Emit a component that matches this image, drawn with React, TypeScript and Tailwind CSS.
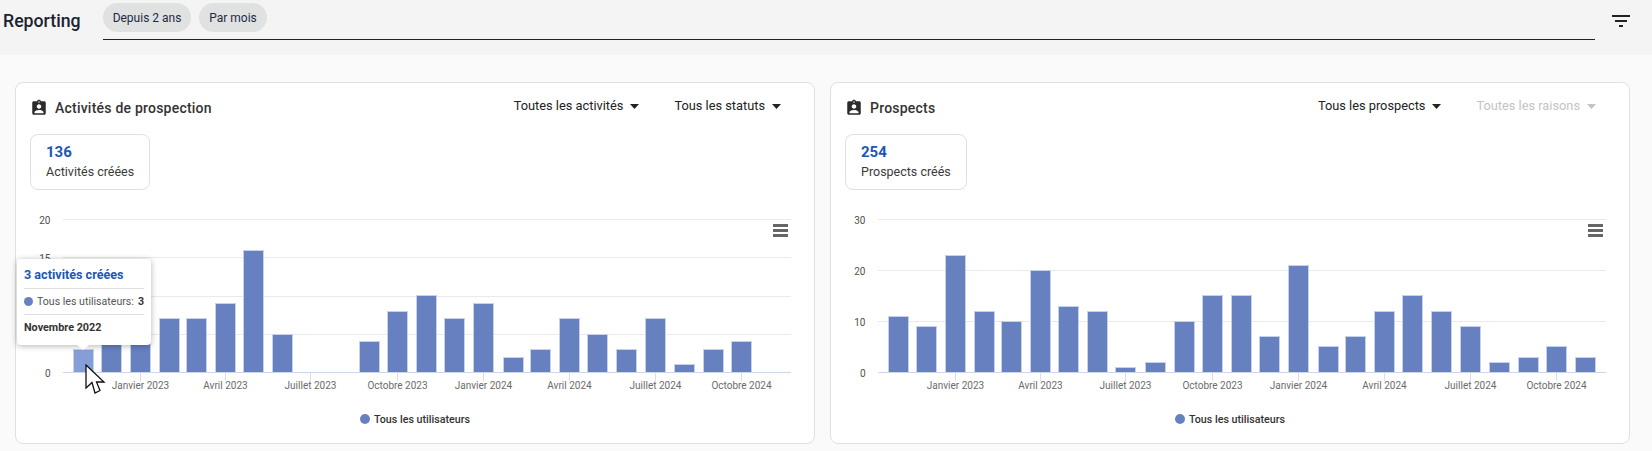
const leftData = [3, 8, 8, 7, 7, 9, 16, 5, 0, 0, 4, 8, 10, 7, 9, 2, 3, 7, 5, 3, 7, 1, 3, 4, 0];
const rightData = [11, 9, 23, 12, 10, 20, 13, 12, 1, 2, 10, 15, 15, 7, 21, 5, 7, 12, 15, 12, 9, 2, 3, 5, 3];
const days = [0, 30, 61, 92, 120, 151, 181, 212, 242, 273, 304, 334, 365, 395, 426, 457, 486, 517, 547, 578, 608, 639, 670, 700, 731];
const ticks = [
  { i: 2, label: "Janvier 2023" },
  { i: 5, label: "Avril 2023" },
  { i: 8, label: "Juillet 2023" },
  { i: 11, label: "Octobre 2023" },
  { i: 14, label: "Janvier 2024" },
  { i: 17, label: "Avril 2024" },
  { i: 20, label: "Juillet 2024" },
  { i: 23, label: "Octobre 2024" },
];

const ASSIGNMENT =
  "M19 3h-4.18C14.4 1.84 13.3 1 12 1c-1.3 0-2.4.84-2.82 2H5c-1.1 0-2 .9-2 2v14c0 1.1.9 2 2 2h14c1.1 0 2-.9 2-2V5c0-1.1-.9-2-2-2zm-7 0c.55 0 1 .45 1 1s-.45 1-1 1-1-.45-1-1 .45-1 1-1zm0 4c1.66 0 3 1.34 3 3s-1.34 3-3 3-3-1.34-3-3 1.34-3 3-3zm6 12H6v-1.4c0-2 4-3.1 6-3.1s6 1.1 6 3.1V19z";

function Caret({ muted }: { muted?: boolean }) {
  return (
    <svg width="9" height="5" viewBox="7 10 10 5" preserveAspectRatio="none" className="ml-[7px] shrink-0">
      <path d="M7 10l5 5 5-5z" fill={muted ? "#c4c4c4" : "#222222"} />
    </svg>
  );
}

function Dropdown({ label, muted }: { label: string; muted?: boolean }) {
  return (
    <div className={`flex items-center text-[12.8px] font-normal leading-4 ${muted ? "text-[#c4c4c4]" : "text-[#222222]"}`}>
      <span>{label}</span>
      <Caret muted={muted} />
    </div>
  );
}

function Chart({ data, yLabels, maxY, hover }: { data: number[]; yLabels: number[]; maxY: number; hover?: boolean }) {
  const top = 219;
  const base = 372;
  const scale = (base - top) / maxY;
  const step = maxY / (yLabels.length - 1);
  return (
    <svg width="798" height="243" viewBox="16 200 798 243" className="block" fontFamily="Roboto, sans-serif">
      {yLabels.map((v, i) => {
        const y = Math.round(top + i * step * scale);
        return (
          <g key={v}>
            {v !== 0 && <rect x="63" y={y} width="728" height="1" fill="#eaeaea" />}
            <text x="50.5" y={y + 4.5} textAnchor="end" fontSize="10" fill="#4f4f4f">
              {v}
            </text>
          </g>
        );
      })}
      {data.map((v, i) => {
        if (!v) return null;
        const x = Math.round(73 + days[i] * 0.94);
        const h = Math.round(v * scale);
        return (
          <rect
            key={i}
            x={x + 0.5}
            y={base - h + 0.5}
            width={20}
            height={h}
            fill={hover && i === 0 ? "#859ed8" : "#6780c0"}
            stroke="#c6d1ec"
            strokeWidth="1"
          />
        );
      })}
      <rect x="63" y="372" width="728" height="1" fill="#ccd6eb" />
      {ticks.map((t) => {
        const x = Math.round(83 + days[t.i] * 0.94);
        return (
          <g key={t.label}>
            <rect x={x} y="373" width="1" height="8" fill="#d8e0f0" />
            <text x={x + 0.5} y="389" textAnchor="middle" fontSize="10" fill="#6b6b6b">
              {t.label}
            </text>
          </g>
        );
      })}
      <circle cx="365" cy="419" r="5" fill="#6780c0" />
      <text x="374" y="423" fontSize="10.7" fontWeight="500" fill="#333333">
        Tous les utilisateurs
      </text>
    </svg>
  );
}

function MenuIcon() {
  return (
    <div className="absolute right-[26px] top-[24px] flex w-[15px] flex-col gap-[2px]">
      <div className="h-[3px] bg-[#666666]" />
      <div className="h-[3px] bg-[#666666]" />
      <div className="h-[3px] bg-[#666666]" />
    </div>
  );
}

function Card({
  title,
  value,
  label,
  dropdowns,
  data,
  yLabels,
  maxY,
  hover,
  children,
}: {
  title: string;
  value: string;
  label: string;
  dropdowns: { label: string; muted?: boolean }[];
  data: number[];
  yLabels: number[];
  maxY: number;
  hover?: boolean;
  children?: React.ReactNode;
}) {
  return (
    <section className="relative h-[362px] w-[800px] shrink-0 rounded-lg border border-[#e0e0e0] bg-white">
      <div className="flex h-[51px] items-start pl-[14px] pr-[33px] pt-[16px]">
        <svg width="18" height="18" viewBox="0 0 24 24" className="shrink-0">
          <path d={ASSIGNMENT} fill="#2b2b2b" />
        </svg>
        <h2 className="ml-[7px] text-[14px] font-medium leading-[18px] tracking-[0.22px] text-[#333333]">{title}</h2>
        <div className="-mt-[1px] ml-auto flex gap-[35px]">
          {dropdowns.map((d) => (
            <Dropdown key={d.label} label={d.label} muted={d.muted} />
          ))}
        </div>
      </div>
      <div className="ml-[14px] flex h-[56px] w-fit flex-col justify-center rounded-lg border border-[#e0e0e0] px-[15px]">
        <div className="text-[15px] font-bold leading-5 text-[#1b57b5]">{value}</div>
        <div className="text-[12.5px] leading-5 text-[#3a3a3a]">{label}</div>
      </div>
      <div className="relative mt-[10px]">
        <Chart data={data} yLabels={yLabels} maxY={maxY} hover={hover} />
        <MenuIcon />
        {children}
      </div>
    </section>
  );
}

function Tooltip() {
  return (
    <div className="absolute left-[1px] top-[59px] h-[86px] w-[134px] rounded-[4px] bg-white px-[7px] shadow-[0_1px_6px_rgba(0,0,0,0.3)]">
      <div className="flex h-[29px] items-center pt-[3px] text-[12.6px] font-bold text-[#1b57b5]">3 activités créées</div>
      <div className="h-px bg-[#e0e0e0]" />
      <div className="flex h-[25px] items-center whitespace-nowrap text-[10.6px] text-[#555555]">
        <span className="mr-[4px] h-[9px] w-[9px] shrink-0 rounded-full bg-[#6780c0]" />
        <span>Tous les utilisateurs:</span>
        <span className="ml-[4px] font-bold text-[#333333]">3</span>
      </div>
      <div className="h-px bg-[#e0e0e0]" />
      <div className="flex h-[26px] items-center text-[10.8px] font-bold text-[#333333]">Novembre 2022</div>
      <div className="absolute left-[60px] top-full h-0 w-0 border-x-[6px] border-t-[5px] border-x-transparent border-t-white" />
    </div>
  );
}

function Cursor() {
  return (
    <svg width="21" height="31" viewBox="0 0 21 31" className="absolute left-[69px] top-[164px]">
      <path
        d="M1 1L1 24L7 18.5L10 29L15 26.5L11.5 18L19 18Z"
        fill="#ffffff"
        stroke="#111111"
        strokeWidth="1.3"
        strokeLinejoin="miter"
      />
    </svg>
  );
}

export default function App() {
  return (
    <div className="h-[451px] w-[1652px] overflow-hidden bg-[#fafafa] font-['Roboto',sans-serif]">
      <header className="flex h-[55px] items-start bg-[#f4f4f4]">
        <h1 className="ml-[3px] mt-[9px] w-[100px] text-[17.7px] font-medium leading-6 text-[#1c2330]">Reporting</h1>
        <div className="mt-[3px] flex h-[37px] w-[1492px] items-start gap-2 border-b border-[#222222]">
          <span className="flex h-[29px] w-[88px] items-center justify-center rounded-full bg-[#e0e2e2] text-[12px] text-[#1f2a44]">
            Depuis 2 ans
          </span>
          <span className="flex h-[29px] w-[68px] items-center justify-center rounded-full bg-[#e0e2e2] text-[12px] text-[#1f2a44]">
            Par mois
          </span>
        </div>
        <svg width="24" height="24" viewBox="0 0 24 24" className="ml-[14px] mt-[9px]">
          <path d="M10 18h4v-2h-4v2zM3 6v2h18V6H3zm3 7h12v-2H6v2z" fill="#222222" />
        </svg>
      </header>
      <main className="flex gap-[15px] pl-[15px] pt-[27px]">
        <Card
          title="Activités de prospection"
          value="136"
          label="Activités créées"
          dropdowns={[{ label: "Toutes les activités" }, { label: "Tous les statuts" }]}
          data={leftData}
          yLabels={[20, 15, 10, 5, 0]}
          maxY={20}
          hover
        >
          <Tooltip />
          <Cursor />
        </Card>
        <Card
          title="Prospects"
          value="254"
          label="Prospects créés"
          dropdowns={[{ label: "Tous les prospects" }, { label: "Toutes les raisons", muted: true }]}
          data={rightData}
          yLabels={[30, 20, 10, 0]}
          maxY={30}
        />
      </main>
    </div>
  );
}
